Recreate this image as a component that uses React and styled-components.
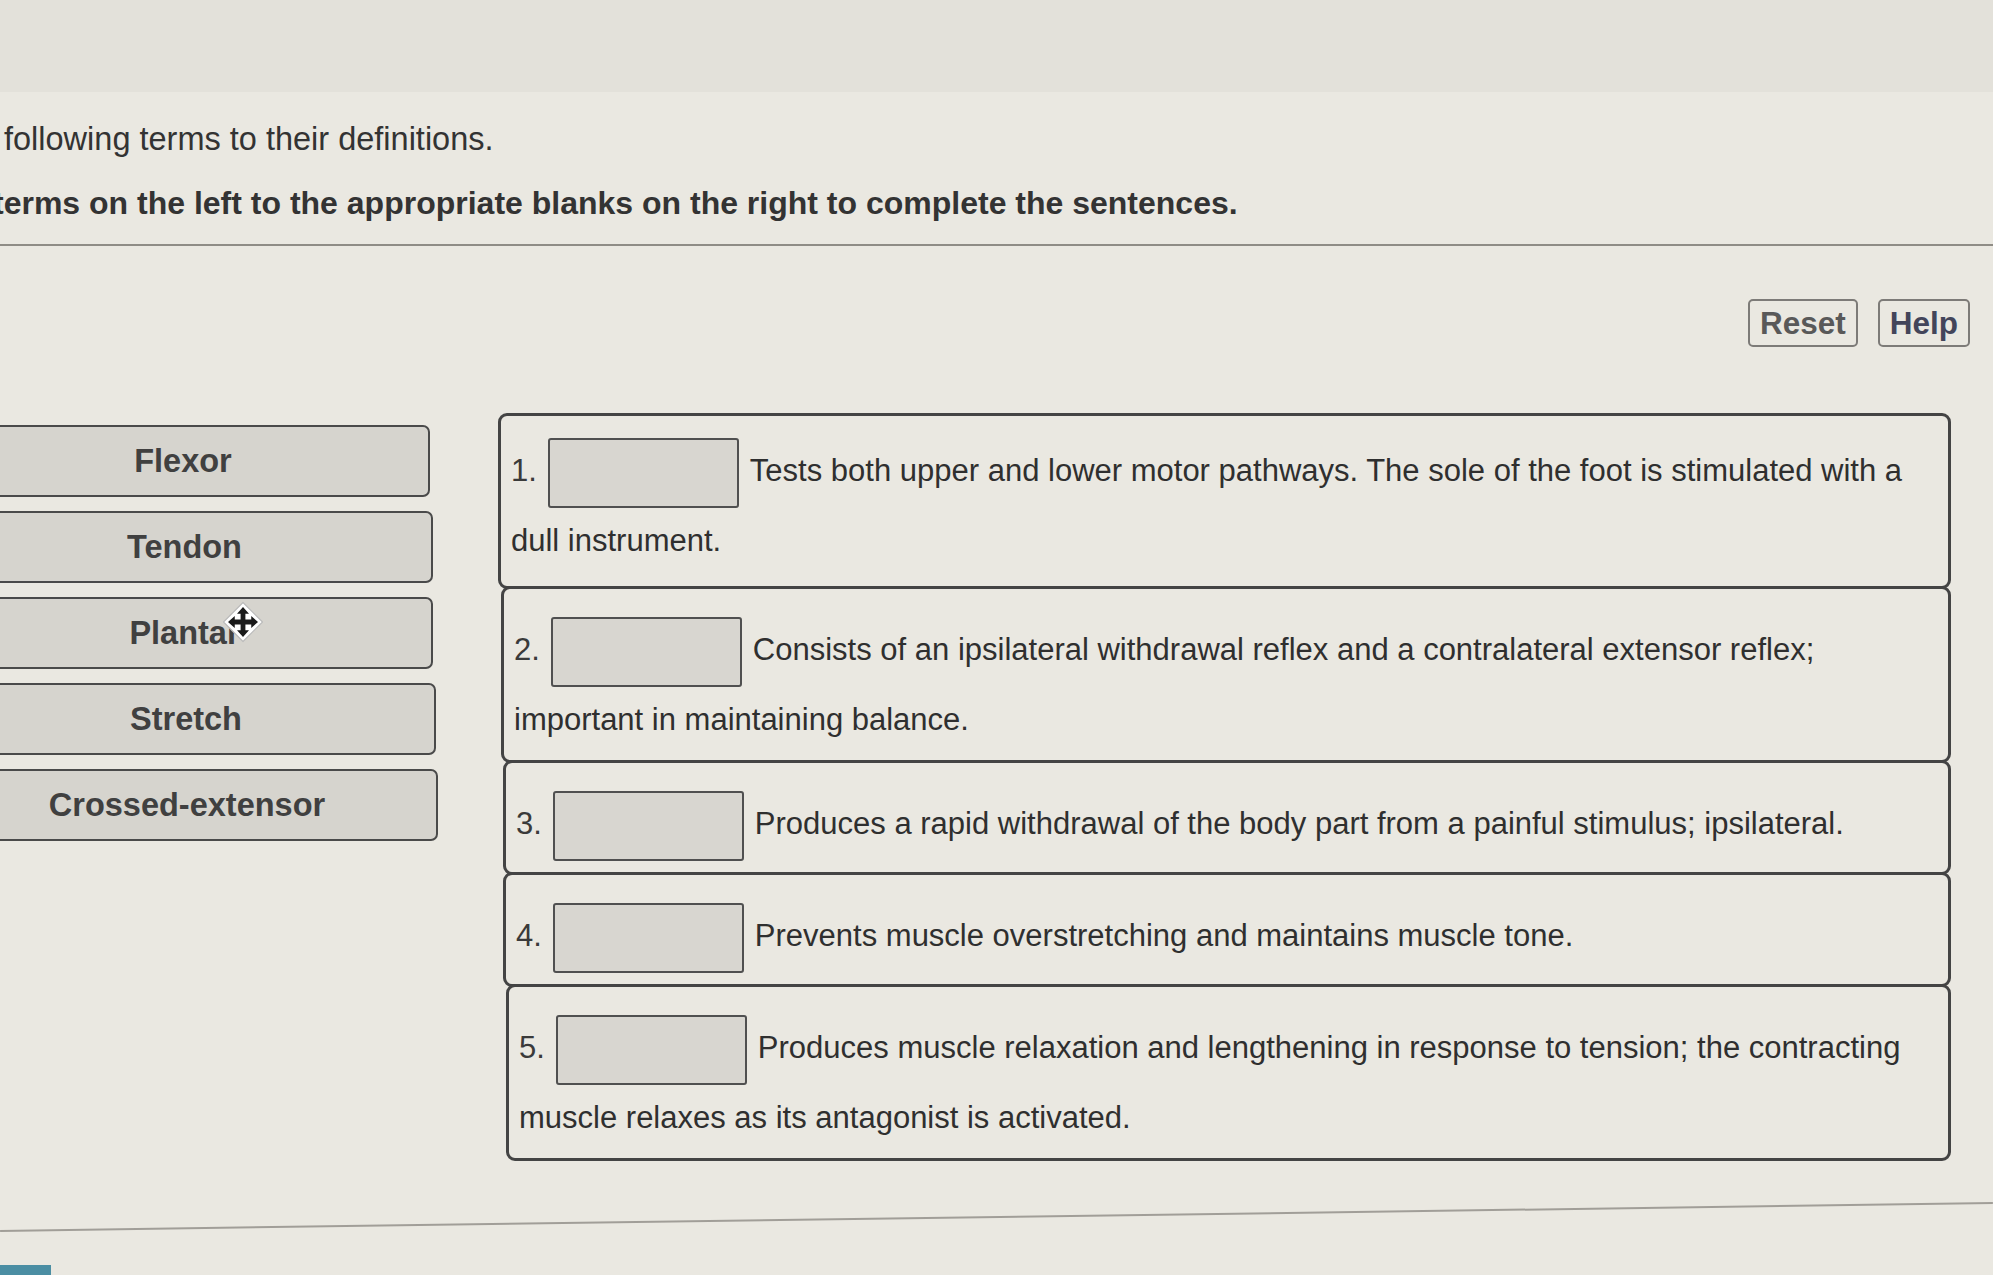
import styled, { createGlobalStyle } from "styled-components";

const Global = createGlobalStyle`
    body {
        margin: 0;
        background: #eae8e1;
        font-family: "Liberation Sans", Arial, sans-serif;
        color: #3d3d3d;
    }
`;

const Page = styled.div`
    position: relative;
    width: 1993px;
    height: 1275px;
    overflow: hidden;
    background: #eae8e1;
`;
const TopBand = styled.div`
    height: 92px;
    background: #e3e1da;
`;
const Intro = styled.p`
    margin: 0;
    padding-left: 4px;
    font-size: ${(p) => (p.$bold ? 32 : 32.5)}px;
    line-height: 50px;
    color: #333;
    font-weight: ${(p) => (p.$bold ? 700 : 400)};
    margin-top: ${(p) => p.$top || 0}px;
    text-indent: ${(p) => p.$indent || 0}px;
    white-space: nowrap;
`;
const Rule = styled.hr`
    margin: 0;
    border: none;
    height: 2px;
    background: #8f8c86;
    margin-top: ${(p) => p.$top}px;
`;
const Toolbar = styled.div`
    display: flex;
    justify-content: flex-end;
    gap: 20px;
    padding: 53px 23px 0 0;
`;
const ToolButton = styled.button`
    height: 48px;
    padding: 0 10px;
    border: 2px solid #7d7b78;
    border-radius: 5px;
    background: transparent;
    font-family: inherit;
    font-weight: 700;
    font-size: 31.5px;
    color: ${(p) => p.$color};
`;
const Main = styled.div`
    display: grid;
    grid-template-columns: 494px 1453px;
    column-gap: 68px;
    margin-left: -64px;
    margin-top: 66px;
`;
const Terms = styled.div`
    display: flex;
    flex-direction: column;
    gap: 14px;
    padding-top: 12px;
`;
const Term = styled.div`
    height: 72px;
    display: flex;
    align-items: center;
    justify-content: center;
    box-sizing: border-box;
    border: 2px solid #4a4a4a;
    border-radius: 7px;
    background: #d6d4ce;
    font-weight: 700;
    font-size: 32.5px;
    color: #404040;
    width: ${(p) => p.$w}px;
`;
const Sentences = styled.div`
    display: flex;
    flex-direction: column;
`;
const Sentence = styled.div`
    box-sizing: border-box;
    border: 3px solid #444;
    border-radius: 9px;
    padding: 20px 12px 14px 10px;
    font-size: 31px;
    line-height: 62px;
    color: #2f2f2f;
    margin-left: ${(p) => p.$shift || 0}px;
    & + & {
        margin-top: -3px;
        padding-top: 26px;
        padding-bottom: 9px;
    }
`;
const Num = styled.span`
    color: #3a3a3a;
`;
const Blank = styled.span`
    display: inline-block;
    box-sizing: border-box;
    width: 191px;
    height: 70px;
    margin: 2px 11px;
    vertical-align: middle;
    border: 2px solid #505050;
    border-radius: 3px;
    background: #d8d6d0;
`;
const BottomRule = styled.hr`
    margin: 55px 0 0;
    border: none;
    height: 2px;
    background: #a19e98;
    transform: rotate(-0.8deg);
`;
const Tab = styled.div`
    position: absolute;
    left: 0;
    bottom: 0;
    width: 51px;
    height: 10px;
    background: #4b8ea3;
`;
const Cursor = styled.svg`
    position: absolute;
    left: 222px;
    top: 601px;
`;

const terms = [
    ["Flexor", 494],
    ["Tendon", 497],
    ["Plantar", 497],
    ["Stretch", 500],
    ["Crossed-extensor", 502],
];

const sentences = [
    ["1.", "Tests both upper and lower motor pathways. The sole of the foot is stimulated with a dull instrument.", 0],
    ["2.", "Consists of an ipsilateral withdrawal reflex and a contralateral extensor reflex; important in maintaining balance.", 3],
    ["3.", "Produces a rapid withdrawal of the body part from a painful stimulus; ipsilateral.", 5],
    ["4.", "Prevents muscle overstretching and maintains muscle tone.", 5],
    ["5.", "Produces muscle relaxation and lengthening in response to tension; the contracting muscle relaxes as its antagonist is activated.", 8],
];

const App = () => {
    return (
        <Page>
            <Global />
            <TopBand />
            <Intro $top={22}>following terms to their definitions.</Intro>
            <Intro $bold $top={14} $indent={-11}>terms on the left to the appropriate blanks on the right to complete the sentences.</Intro>
            <Rule $top={16} />
            <Toolbar>
                <ToolButton $color="#595959">Reset</ToolButton>
                <ToolButton $color="#43455a">Help</ToolButton>
            </Toolbar>
            <Main>
                <Terms>
                    {terms.map(([t, w]) => (
                        <Term key={t} $w={w}>{t}</Term>
                    ))}
                </Terms>
                <Sentences>
                    {sentences.map(([n, text, shift]) => (
                        <Sentence key={n} $shift={shift}>
                            <Num>{n}</Num>
                            <Blank />
                            {text}
                        </Sentence>
                    ))}
                </Sentences>
            </Main>
            <BottomRule />
            <Cursor width="42" height="42" viewBox="0 0 28 28">
                <path d="M14 1 L27 14 L14 27 L1 14 Z" fill="#fff" stroke="#bbb" strokeWidth="0.8" strokeLinejoin="round" />
                <path d="M14 4 L18 8.5 L15.6 8.5 L15.6 12.4 L19.5 12.4 L19.5 10 L24 14 L19.5 18 L19.5 15.6 L15.6 15.6 L15.6 19.5 L18 19.5 L14 24 L10 19.5 L12.4 19.5 L12.4 15.6 L8.5 15.6 L8.5 18 L4 14 L8.5 10 L8.5 12.4 L12.4 12.4 L12.4 8.5 L10 8.5 Z" fill="#1a1a1a" />
            </Cursor>
            <Tab />
        </Page>
    );
};

export default App;
